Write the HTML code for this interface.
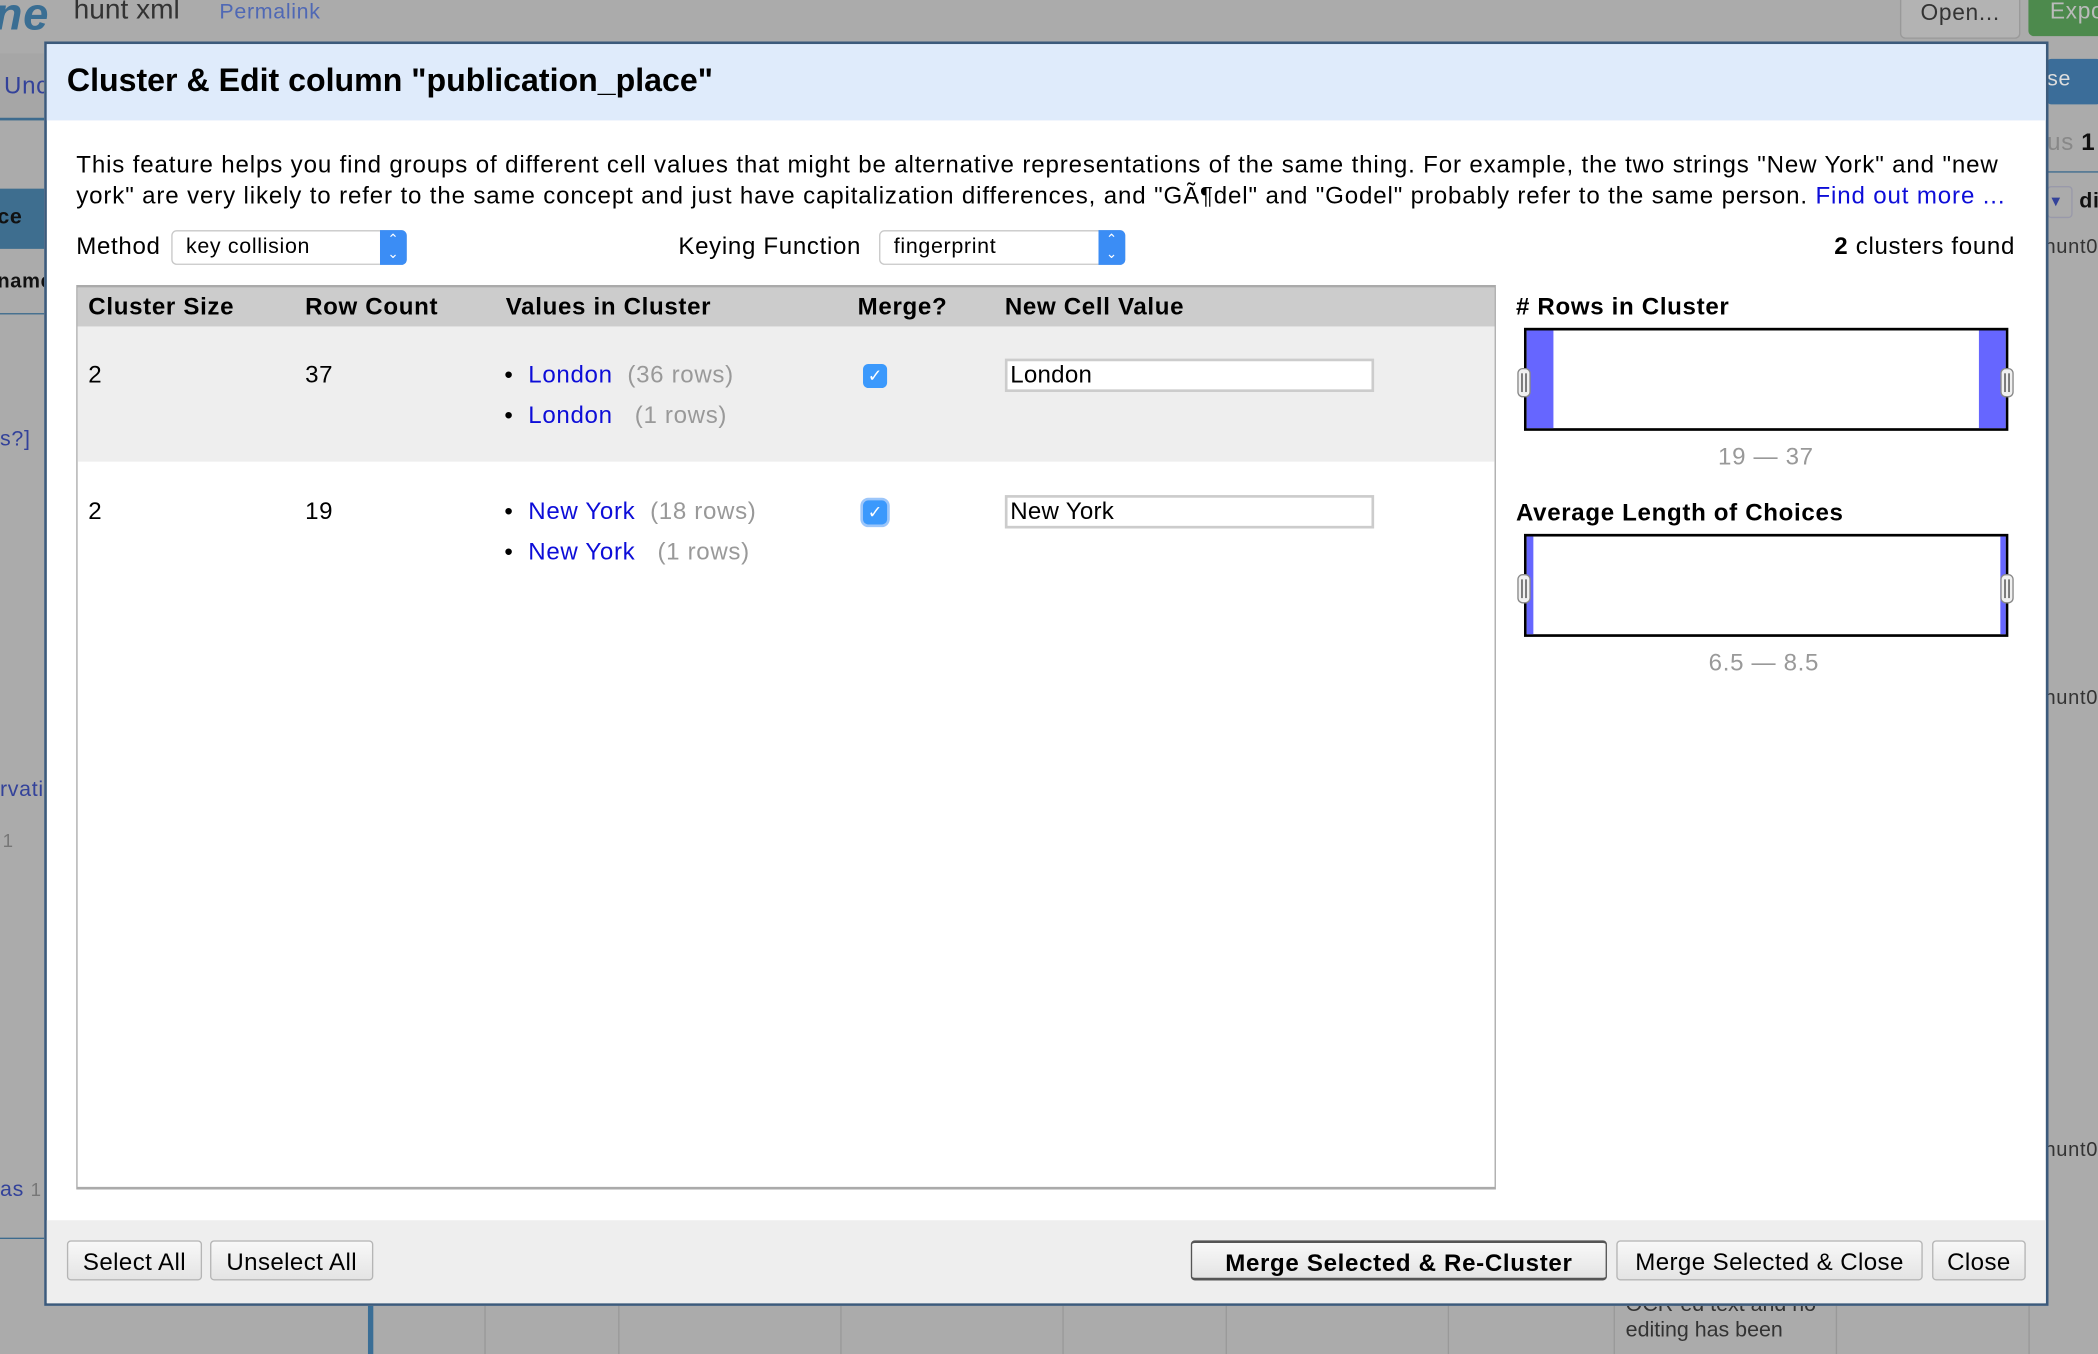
<!DOCTYPE html>
<html><head><meta charset="utf-8">
<style>
html,body{margin:0;padding:0;width:2098px;height:1354px;overflow:hidden;background:#ababab;}
#s{position:absolute;left:0;top:0;width:1568px;height:1012px;transform:scale(1.33801);transform-origin:0 0;font-family:"Liberation Sans",Arial,sans-serif;color:#000;background:#ababab;overflow:hidden;letter-spacing:0.5px;}
.a{position:absolute;white-space:nowrap;}
.btn{position:absolute;height:30px;border:1px solid #b5b5b5;border-radius:3px;background:linear-gradient(#f8f8f8,#e4e4e4);font-size:18px;line-height:30px;text-align:center;box-sizing:border-box;letter-spacing:0.3px;}
.sel{position:absolute;height:26px;border:1px solid #c8c8c8;border-radius:4px;background:#fff;font-size:16px;line-height:24px;box-sizing:border-box;padding-left:10px;}
.sel i{position:absolute;right:-1px;top:-1px;width:20px;height:26px;background:#3b8df5;border-radius:0 4px 4px 0;color:#fff;font-style:normal;font-size:10px;line-height:11px;text-align:center;padding-top:2px;box-sizing:border-box;}
.b{font-weight:bold;}
.lk{color:#0d0dd8;}
.g{color:#999;}
.cb{position:absolute;width:18px;height:18px;background:#3b99fc;border-radius:4px;color:#fff;font-size:13px;line-height:18px;text-align:center;letter-spacing:0;}
.inp{position:absolute;width:276px;height:25px;border:2px solid #ccc;background:#fff;box-sizing:border-box;font-size:18px;line-height:21px;padding-left:2px;letter-spacing:0.2px;}
.hist{position:absolute;left:1139px;width:362px;border:2px solid #000;box-sizing:border-box;background:#fff;height:77px;}
.hd{position:absolute;width:10px;height:22px;border:1px solid #888;border-radius:4px;background:#f0f0f0;box-sizing:border-box;}
.hd:after{content:"";position:absolute;left:2px;top:3px;width:2px;height:14px;border-left:1px solid #444;border-right:1px solid #444;}
.vl{position:absolute;top:975px;width:1px;height:40px;background:#999;}
</style></head><body><div id="s">
<div class="a" style="left:-4px;top:-8px;font-size:34px;color:#3a6e93;font-style:italic;font-weight:bold">ne</div>
<div class="a" style="left:55px;top:-4px;font-size:21px;color:#333;letter-spacing:0">hunt xml</div>
<div class="a" style="left:164px;top:1px;font-size:16px;color:#4f68b5">Permalink</div>
<div class="a" style="left:1420px;top:-6px;width:88px;height:33px;border:1px solid #999;border-radius:4px;background:#b3b3b3;font-size:17px;line-height:30px;text-align:center;color:#333">Open...</div>
<div class="a" style="left:1516px;top:-6px;width:60px;height:33px;border-radius:4px;background:#4d8a4d;font-size:17px;line-height:30px;color:#bbb;padding-left:16px">Expo</div>
<div class="a" style="left:0;top:40px;width:34px;height:48px;background:#a6a6a6"></div>
<div class="a" style="left:3px;top:54px;font-size:18px;color:#33429a">Unc</div>
<div class="a" style="left:0;top:88px;width:34px;height:2px;background:#3d6b8e"></div>
<div class="a" style="left:0;top:141px;width:34px;height:45px;background:#3e6e8f"></div>
<div class="a" style="left:-2px;top:154px;font-size:16px;color:#111;font-weight:bold">ce</div>
<div class="a" style="left:-2px;top:202px;font-size:15px;color:#111;font-weight:bold">name</div>
<div class="a" style="left:0;top:234px;width:34px;height:1px;background:#3d6b8e"></div>
<div class="a" style="left:0;top:320px;font-size:16px;color:#33429a">s?]</div>
<div class="a" style="left:0;top:582px;font-size:16px;color:#33429a">rvati</div>
<div class="a" style="left:2px;top:620px;font-size:14px;color:#777">1</div>
<div class="a" style="left:0;top:881px;font-size:16px;color:#33429a">as <span style="color:#777;font-size:14px">1</span></div>
<div class="a" style="left:0;top:925px;width:34px;height:1px;background:#3d6b8e"></div>
<div class="a" style="left:1530px;top:44px;width:40px;height:34px;background:#3b6d99;border-radius:3px"></div>
<div class="a" style="left:1530px;top:51px;font-size:16px;color:#ddd">se</div>
<div class="a" style="left:1530px;top:96px;font-size:18px;color:#888">us <b style="color:#111">1</b></div>
<div class="a" style="left:1530px;top:128px;width:40px;height:1px;background:#3d6b8e"></div>
<div class="a" style="left:1530px;top:139px;width:17px;height:22px;border:1px solid #99a;border-radius:3px;color:#33429a;font-size:11px;line-height:22px">▼</div>
<div class="a" style="left:1554px;top:142px;font-size:16px;color:#111;font-weight:bold">di</div>
<div class="a" style="left:1528px;top:176px;font-size:15px;color:#333">hunt0</div>
<div class="a" style="left:1528px;top:513px;font-size:15px;color:#333">hunt0</div>
<div class="a" style="left:1528px;top:851px;font-size:15px;color:#333">hunt0</div>
<div class="a" style="left:275px;top:975px;width:4px;height:40px;background:#3a6e96"></div>
<div class="vl" style="left:362px"></div><div class="vl" style="left:462px"></div><div class="vl" style="left:628px"></div><div class="vl" style="left:794px"></div><div class="vl" style="left:916px"></div><div class="vl" style="left:1082px"></div><div class="vl" style="left:1206px"></div><div class="vl" style="left:1372px"></div><div class="vl" style="left:1516px"></div>
<div class="a" style="left:1215px;top:966px;font-size:16px;color:#333;line-height:19px;letter-spacing:0">OCR-ed text and no<br>editing has been</div>

<div class="a" style="left:33px;top:31px;width:1498px;height:945px;border:2px solid #3c5a7b;box-sizing:border-box;background:#fff"></div>
<div class="a" style="left:35px;top:33px;width:1494px;height:57px;background:#dfebfb"></div>
<div class="a b" style="left:50px;top:47px;font-size:24px;letter-spacing:0">Cluster &amp; Edit column "publication_place"</div>
<div class="a" style="left:57px;top:112px;font-size:18px;line-height:23px;letter-spacing:0.64px">This feature helps you find groups of different cell values that might be alternative representations of the same thing. For example, the two strings "New York" and "new<br>york" are very likely to refer to the same concept and just have capitalization differences, and "GÃ¶del" and "Godel" probably refer to the same person. <span class="lk">Find out more ...</span></div>
<div class="a" style="left:57px;top:174px;font-size:18px">Method</div>
<div class="sel" style="left:128px;top:172px;width:176px">key collision<i>⌃<br>⌄</i></div>
<div class="a" style="left:507px;top:174px;font-size:18px">Keying Function</div>
<div class="sel" style="left:657px;top:172px;width:184px">fingerprint<i>⌃<br>⌄</i></div>
<div class="a" style="right:62px;top:174px;font-size:18px"><b>2</b> clusters found</div>

<div class="a" style="left:57px;top:213px;width:1061px;height:676px;border:1px solid #aaa;border-top:2px solid #aaa;border-bottom:2px solid #aaa;box-sizing:border-box;background:#fff"></div>
<div class="a" style="left:58px;top:215px;width:1059px;height:29px;background:#ccc"></div>
<div class="a b" style="left:66px;top:219px;font-size:18px">Cluster Size</div>
<div class="a b" style="left:228px;top:219px;font-size:18px">Row Count</div>
<div class="a b" style="left:378px;top:219px;font-size:18px">Values in Cluster</div>
<div class="a b" style="left:641px;top:219px;font-size:18px">Merge?</div>
<div class="a b" style="left:751px;top:219px;font-size:18px">New Cell Value</div>
<div class="a" style="left:58px;top:244px;width:1059px;height:101px;background:#eee"></div>
<div class="a" style="left:66px;top:270px;font-size:18px">2</div>
<div class="a" style="left:228px;top:270px;font-size:18px">37</div>
<div class="a" style="left:377px;top:265px;font-size:18px;line-height:30px">•&nbsp; <span class="lk">London</span> &nbsp;<span class="g">(36 rows)</span><br>•&nbsp; <span class="lk">London</span> &nbsp; <span class="g">(1 rows)</span></div>
<div class="cb" style="left:645px;top:272px">✓</div>
<div class="inp" style="left:751px;top:268px">London</div>
<div class="a" style="left:66px;top:372px;font-size:18px">2</div>
<div class="a" style="left:228px;top:372px;font-size:18px">19</div>
<div class="a" style="left:377px;top:367px;font-size:18px;line-height:30px">•&nbsp; <span class="lk">New York</span> &nbsp;<span class="g">(18 rows)</span><br>•&nbsp; <span class="lk">New York</span> &nbsp; <span class="g">(1 rows)</span></div>
<div class="cb" style="left:645px;top:374px;box-shadow:0 0 0 2px #9cc6fa">✓</div>
<div class="inp" style="left:751px;top:370px">New York</div>

<div class="a b" style="left:1133px;top:219px;font-size:18px"># Rows in Cluster</div>
<div class="hist" style="top:245px"><div class="a" style="left:0;top:0;width:20px;height:73px;background:#6666ff"></div><div class="a" style="right:0;top:0;width:20px;height:73px;background:#6666ff"></div></div>
<div class="hd" style="left:1134px;top:275px"></div><div class="hd" style="left:1495px;top:275px"></div>
<div class="a g" style="left:1284px;top:331px;font-size:18px">19 — 37</div>
<div class="a b" style="left:1133px;top:373px;font-size:18px">Average Length of Choices</div>
<div class="hist" style="top:399px"><div class="a" style="left:0;top:0;width:5px;height:73px;background:#6666ff"></div><div class="a" style="right:0;top:0;width:4px;height:73px;background:#6666ff"></div></div>
<div class="hd" style="left:1134px;top:429px"></div><div class="hd" style="left:1495px;top:429px"></div>
<div class="a g" style="left:1277px;top:485px;font-size:18px">6.5 — 8.5</div>

<div class="a" style="left:35px;top:912px;width:1494px;height:62px;background:#eee"></div>
<div class="btn" style="left:50px;top:927px;width:101px">Select All</div>
<div class="btn" style="left:157px;top:927px;width:122px">Unselect All</div>
<div class="btn b" style="left:890px;top:927px;width:311px;border:1px solid #555;border-top:2px solid #555;border-bottom:2px solid #555;letter-spacing:0.5px">Merge Selected &amp; Re-Cluster</div>
<div class="btn" style="left:1208px;top:927px;width:229px">Merge Selected &amp; Close</div>
<div class="btn" style="left:1444px;top:927px;width:70px">Close</div>
</div></body></html>
